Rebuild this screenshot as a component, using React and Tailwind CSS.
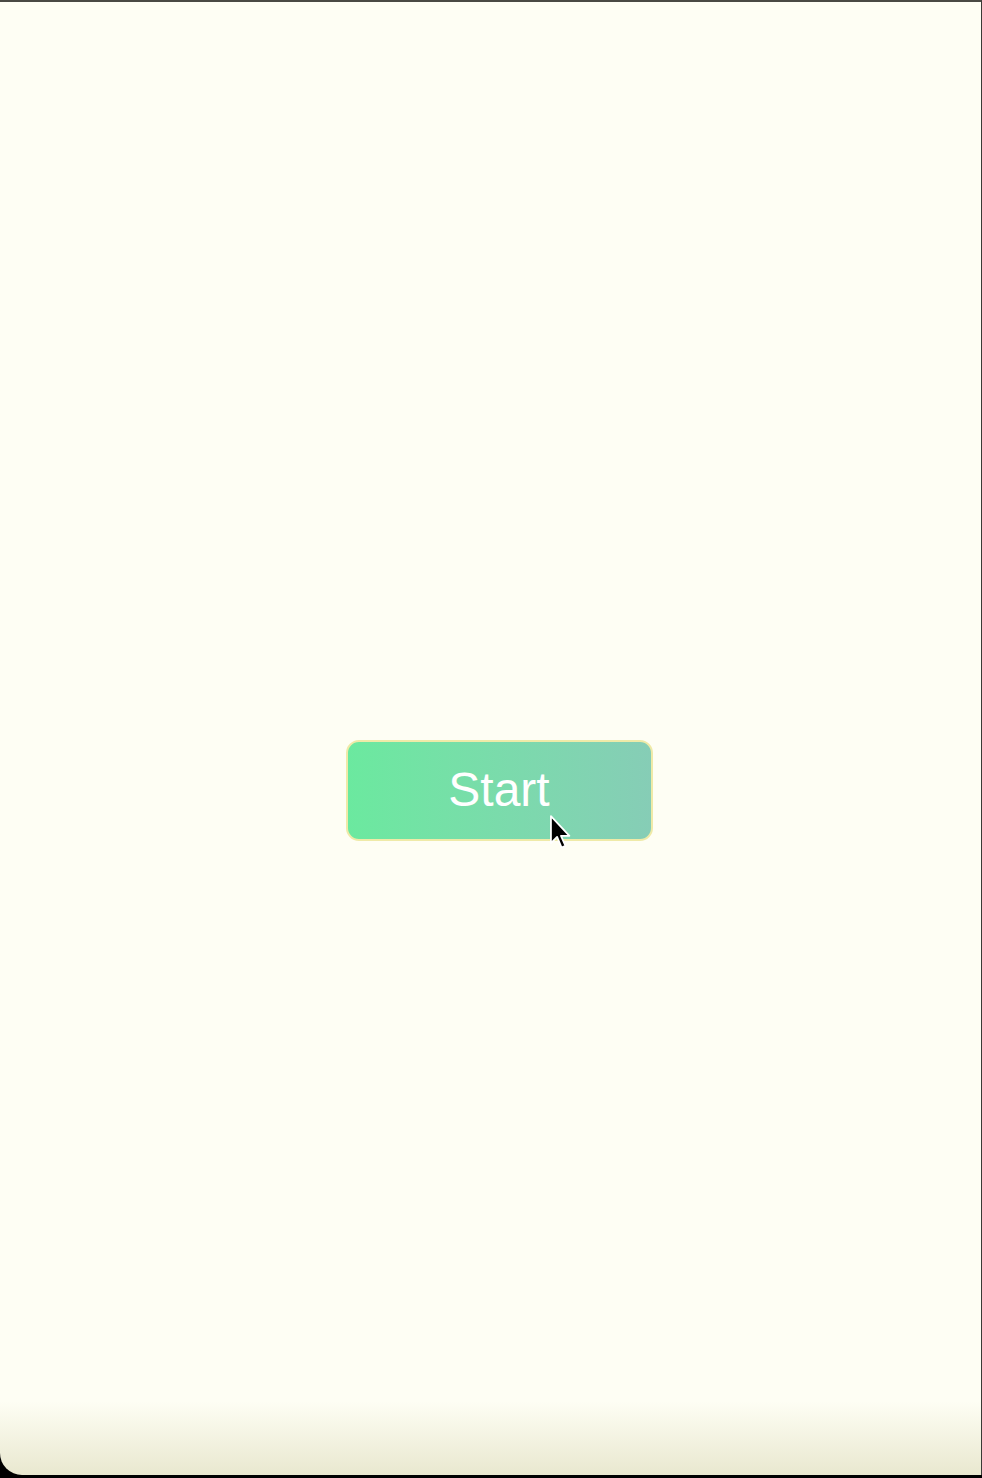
export default function App() {
  return (
    <div className="w-full h-[1478px] bg-black" style={{ fontFamily: '"Liberation Sans", Arial, sans-serif' }}>
      <div className="h-[1475px] rounded-bl-[22px] border-t-2 border-t-[#4a4a44] border-r border-r-[#3a3a36] bg-linear-to-b from-[#fefef4] from-[95%] to-[#e9e8cf] flex justify-center pt-[738px] pl-[17px]">
        <div className="relative h-fit">
          <button className="w-[307px] h-[101px] rounded-[13px] border-2 border-[#efeaa8] bg-linear-to-r from-[#6be99f] to-[#86cdb6] text-white text-[48px] leading-none pb-[2px]">
            Start
          </button>

          {/* mouse pointer */}
          <svg className="absolute left-[202px] top-[74px]" width="26" height="38" viewBox="0 0 22 34">
            <path
              d="M2 2 L2 26 L7.5 20.5 L11.5 30 L15 28.5 L11 19.5 L18.5 19.5 Z"
              fill="#000"
              stroke="#fff"
              strokeWidth="1.6"
              strokeLinejoin="round"
            />
          </svg>
        </div>
      </div>
    </div>
  )
}
